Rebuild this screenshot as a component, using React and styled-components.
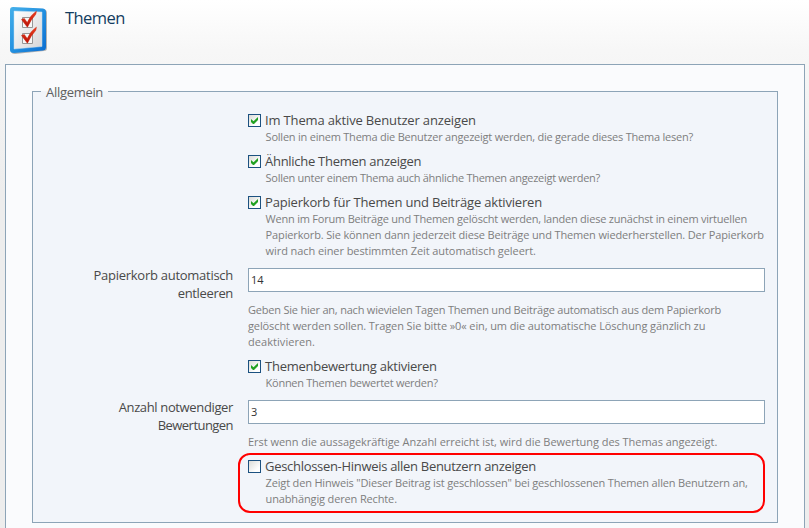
import React from "react";
import styled, { createGlobalStyle } from "styled-components";

const GlobalStyle = createGlobalStyle`
  * { box-sizing: border-box; }
  html, body { margin: 0; height: 100%; overflow: hidden; }
  body { font-family: "Open Sans", "Trebuchet MS", sans-serif; font-size: 13px; line-height: 18px; color: #494949; }
`;

const Page = styled.main`
  display: flex;
  flex-direction: column;
  height: 528px;
  overflow: hidden;
  background: linear-gradient(#ffffff 0, #f7f7f7 50px, #ededed 190px);
`;

const Header = styled.header`
  display: flex;
  flex: none;
  align-items: flex-start;
  gap: 17px;
  height: 64px;
  padding: 5px 0 0 8px;
`;

const Title = styled.h1`
  margin: 0;
  padding-top: 1px;
  font-size: 16.5px;
  font-weight: 500;
  line-height: 24px;
  letter-spacing: -0.55px;
  color: #123c60;
`;

const Panel = styled.section`
  flex: none;
  width: 800px;
  height: 480px;
  margin-left: 5px;
  padding: 18px 26px 0;
  border: 1px solid #8da4b7;
  background: #fafbfd;
`;

const Fieldset = styled.fieldset`
  width: 746px;
  height: 440px;
  margin: 0;
  padding: 11px 12px 0 0;
  border: 1px solid #8da4b7;
  background: #f2f5fa;
`;

const Legend = styled.legend`
  height: 17px;
  margin-left: 8px;
  padding: 0 5px;
  letter-spacing: -0.3px;
  color: #5f5f5f;
`;

const Row = styled.div`
  display: grid;
  grid-template-columns: 200px 517px;
  column-gap: 15px;
  margin-bottom: 7px;
`;

const FieldLabel = styled.label`
  display: flex;
  flex-direction: column;
  align-items: flex-end;
`;

const Field = styled.div`
  grid-column: 2;
`;

const Line = styled.span`
  display: block;
  white-space: pre;
  letter-spacing: ${(p) => p.$ls}px;
`;

const CheckLabel = styled.label`
  display: flex;
  align-items: center;
  gap: 4px;
  height: 18px;
`;

const Box = styled.span`
  display: grid;
  place-items: center;
  flex: none;
  width: 13px;
  height: 13px;
  margin-top: 1px;
  border: 1px solid #1c5180;
  background: linear-gradient(135deg, #dcdcd7, #ffffff 75%);
`;

const Description = styled.p`
  margin: 0;
  padding-left: ${(p) => (p.$indent ? 17.6 : 0)}px;
  font-size: 11px;
  line-height: 16px;
  color: #7e7e7e;
`;

const TextInput = styled.input`
  display: block;
  width: 517px;
  height: 24px;
  margin: 2px 0 10px;
  padding: 0 2px 1px;
  border: 1px solid #8da4b7;
  border-radius: 0;
  outline: none;
  background: #fff;
  color: #333;
  font: 11px "Open Sans", sans-serif;
`;

const Highlight = styled.div`
  width: 527px;
  height: 60px;
  margin: -4px 0 0 205px;
  padding: 2px 0 0 8px;
  border: 2px solid #ff0000;
  border-radius: 12px;
`;

function ThemesIcon() {
  return (
    <svg width="40" height="51" viewBox="0 0 40 51" aria-hidden="true">
      <defs>
        <linearGradient id="frame" x1="0" y1="0" x2="1" y2="1">
          <stop offset="0" stopColor="#45b0ea" />
          <stop offset="0.5" stopColor="#2491e0" />
          <stop offset="1" stopColor="#0a6cd0" />
        </linearGradient>
        <linearGradient id="sheet" x1="0" y1="0" x2="1" y2="1">
          <stop offset="0" stopColor="#ffffff" />
          <stop offset="1" stopColor="#d5d5d7" />
        </linearGradient>
        <linearGradient id="tick" x1="0" y1="0" x2="0" y2="1">
          <stop offset="0" stopColor="#f0401e" />
          <stop offset="1" stopColor="#b50f05" />
        </linearGradient>
      </defs>
      <path d="M6 3 36 4Q39 5 39 8V43Q39 46 36 46L7 49Q3 49 3 46V6Q3 3 6 3Z" fill="#8c8c8c" opacity=".65" />
      <path d="M5 2 35 3.5Q38 4 38 7V42Q38 45 35 45.5L6 48Q2 48 2 45V5Q2 2 5 2Z" fill="url(#frame)" />
      <path d="M6 6 34 7V41.5L6 44Z" fill="url(#sheet)" stroke="#bfdcf0" strokeWidth=".5" />
      <g fill="#f7f7f7" stroke="#969696">
        <path d="M14.5 12.5h10v10h-10z" />
        <path d="M14.5 28.5h10v10h-10z" />
      </g>
      <g fill="url(#tick)" stroke="#c8200c" strokeWidth=".5">
        <path d="M13.5 14.5 16.3 13.4 19.2 17.6Q22.5 10 28.4 6.2L27.8 9.2Q22.9 14.6 19.4 22.2Z" />
        <path d="M13.5 30.5 16.3 29.4 19.2 33.6Q22.5 26 28.4 22.2L27.8 25.2Q22.9 30.6 19.4 38.2Z" />
      </g>
    </svg>
  );
}

function Check({ text, ls, checked = true, children }) {
  return (
    <>
      <CheckLabel>
        <Box role="checkbox" aria-checked={checked}>
          {checked && (
            <svg width="9" height="9" viewBox="0 0 9 9" aria-hidden="true">
              <path d="M1 3v3l2 2h1l4-4V1L3.5 5.3Z" fill="#21a121" />
            </svg>
          )}
        </Box>
        <Line $ls={ls}>{text}</Line>
      </CheckLabel>
      <Description $indent>{children}</Description>
    </>
  );
}

function NumberField({ label, value, children }) {
  return (
    <Row>
      <FieldLabel>{label}</FieldLabel>
      <Field>
        <TextInput defaultValue={value} />
        <Description>{children}</Description>
      </Field>
    </Row>
  );
}

export default function App() {
  return (
    <Page>
      <GlobalStyle />
      <Header>
        <ThemesIcon />
        <Title>Themen</Title>
      </Header>
      <Panel>
        <Fieldset>
          <Legend>Allgemein</Legend>
          <Row>
            <Field>
              <Check text="Im Thema aktive Benutzer anzeigen" ls={-0.15}>
                <Line $ls={-0.225}>Sollen in einem Thema die Benutzer angezeigt werden, die gerade dieses Thema lesen?</Line>
              </Check>
            </Field>
          </Row>
          <Row>
            <Field>
              <Check text="Ähnliche Themen anzeigen" ls={-0.28}>
                <Line $ls={-0.285}>Sollen unter einem Thema auch ähnliche Themen angezeigt werden?</Line>
              </Check>
            </Field>
          </Row>
          <Row>
            <Field>
              <Check text="Papierkorb für Themen und Beiträge aktivieren" ls={-0.18}>
                <Line $ls={-0.215}>Wenn im Forum Beiträge und Themen gelöscht werden, landen diese zunächst in einem virtuellen</Line>
                <Line $ls={-0.14}>Papierkorb. Sie können dann jederzeit diese Beiträge und Themen wiederherstellen. Der Papierkorb</Line>
                <Line $ls={-0.08}>wird nach einer bestimmten Zeit automatisch geleert.</Line>
              </Check>
            </Field>
          </Row>
          <NumberField
            value="14"
            label={
              <>
                <Line $ls={-0.27}>Papierkorb automatisch</Line>
                <Line $ls={-0.35}>entleeren</Line>
              </>
            }
          >
            <Line $ls={-0.21}>Geben Sie hier an, nach wievielen Tagen Themen und Beiträge automatisch aus dem Papierkorb</Line>
            <Line $ls={-0.105}>gelöscht werden sollen. Tragen Sie bitte »0« ein, um die automatische Löschung gänzlich zu</Line>
            <Line $ls={0.06}>deaktivieren.</Line>
          </NumberField>
          <Row>
            <Field>
              <Check text="Themenbewertung aktivieren" ls={-0.25}>
                <Line $ls={-0.27}>Können Themen bewertet werden?</Line>
              </Check>
            </Field>
          </Row>
          <NumberField
            value="3"
            label={
              <>
                <Line $ls={-0.36}>Anzahl notwendiger</Line>
                <Line $ls={-0.55}>Bewertungen</Line>
              </>
            }
          >
            <Line $ls={-0.035}>Erst wenn die aussagekräftige Anzahl erreicht ist, wird die Bewertung des Themas angezeigt.</Line>
          </NumberField>
          <Highlight>
            <Check text="Geschlossen-Hinweis allen Benutzern anzeigen" ls={-0.3} checked={false}>
              <Line $ls={-0.17}>Zeigt den Hinweis "Dieser Beitrag ist geschlossen" bei geschlossenen Themen allen Benutzern an,</Line>
              <Line $ls={-0.14}>unabhängig deren Rechte.</Line>
            </Check>
          </Highlight>
        </Fieldset>
      </Panel>
    </Page>
  );
}
